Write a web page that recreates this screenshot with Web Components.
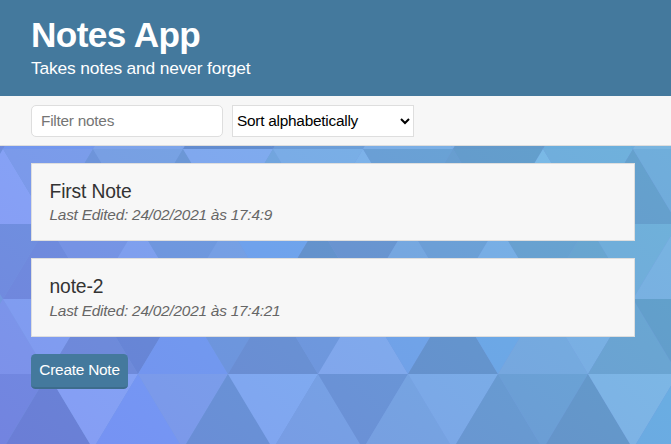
<!DOCTYPE html>
<html lang="en">
<head>
<meta charset="utf-8">
<title>Notes App</title>
<style>
html,body{margin:0;height:100%;overflow:hidden}
body{font-family:"Liberation Sans",Arial,sans-serif;color:#333}
</style>
</head>
<body>
<notes-app>
  <app-header slot="header" heading="Notes App">Takes notes and never forget</app-header>
  <filter-bar slot="filters"></filter-bar>
  <note-card heading="First Note">Last Edited: 24/02/2021 às 17:4:9</note-card>
  <note-card heading="note-2">Last Edited: 24/02/2021 às 17:4:21</note-card>
  <app-button>Create Note</app-button>
</notes-app>
<script>
function shadow(el, html){ el.attachShadow({mode:'open'}).innerHTML = html; }

customElements.define('triangle-backdrop', class extends HTMLElement {
  connectedCallback(){
    // Rows are 75px high; triangles are 90px wide. Each list alternates from its first apex x.
    const rows = [
      {y:74,  x:-42, up:true,  c:'6f8bdd 6f8bdd 7399ee 7399ee 7da5ea 7da5ea 628ecf 628ecf 6c9fd8 6c9fd8 7bb0e5 7bb0e5 649ccb 649ccb 6cb0dc 6cb0dc 79b7df'},
      {y:149, x:-42, up:false, c:'6f8bdd 86a0f5 7b9aea 6e93da 789fe3 6c96d6 80a8ee 72a4de 7aace6 7db1e9 6a9fd5 689dd0 649ccc 7ab8e6 70aedc 65a0cd 70addb'},
      {y:224, x:3,   up:false, c:'708cdf 6f8add 7693e4 7f9fee 6f97de 769fe4 6fa2ec 6492cc 6994d0 76a7e0 6c9fd6 78aee5 68a1d0 69a5d0 70aeda 78b3e1'},
      {y:299, x:3,   up:true,  c:'7c93ea 809cf0 6e8ada 6786d6 7298ef 6d96dd 6990d3 6e98dd 80a9ec 70a3e8 6494cd 6ca8e6 75aadf 79b0e3 6aa5d2 629fcb'},
      {y:374, x:3,   up:false, c:'7285e0 6a80d6 859ff4 7595f3 7b9aea 6990d6 80a7f0 779fe4 6a92d6 76a2e1 7ba9e7 6899d1 6b9fd5 6497ca 7db4e5 6aade2'}
    ];
    let defs = '', shapes = '', id = 0;
    for (const r of rows) {
      let up = r.up, x = r.x;
      for (const hex of r.c.split(' ')) {
        const v = [0,2,4].map(i => parseInt(hex.substr(i,2),16));
        const a = `rgb(${v[0]+1},${v[1]-3},${v[2]})`, b = `rgb(${v[0]-1},${v[1]+3},${v[2]})`;
        const t = r.y, m = r.y + 75;
        defs += `<linearGradient id="g${id}" x1="0" y1="1" x2="1" y2="0"><stop stop-color="${a}"/><stop offset="1" stop-color="${b}"/></linearGradient>`;
        shapes += `<polygon fill="url(#g${id})" points="${up ? `${x},${t} ${x+45},${m} ${x-45},${m}` : `${x-45},${t} ${x+45},${t} ${x},${m}`}"/>`;
        id++; up = !up; x += 45;
      }
    }
    shadow(this, `<style>:host{display:block}svg{display:block;background:#7298e0}</style><svg width="671" height="444"><defs>${defs}</defs>${shapes}</svg>`);
  }
});

customElements.define('notes-app', class extends HTMLElement {
  connectedCallback(){
    shadow(this, `<style>
      :host{display:block;position:relative;height:444px;overflow:hidden}
      triangle-backdrop{position:absolute;inset:0}
      .page{position:relative}
      main{padding:17px 36px 0 31px;display:flex;flex-direction:column;align-items:stretch;gap:17px}
    </style><triangle-backdrop></triangle-backdrop>
    <div class="page"><slot name="header"></slot><slot name="filters"></slot><main><slot></slot></main></div>`);
  }
});

customElements.define('app-header', class extends HTMLElement {
  connectedCallback(){
    shadow(this, `<style>
      :host{display:block;box-sizing:border-box;height:96px;background:#44799d;color:#fff;padding:15px 31px 0}
      h1{margin:0;font-size:35.2px;line-height:40px;font-weight:700;letter-spacing:-.6px}
      p{margin:3px 0 0;font-size:17.4px;line-height:20px;letter-spacing:-.17px}
    </style><h1>${this.getAttribute('heading')}</h1><p><slot></slot></p>`);
  }
});

customElements.define('filter-bar', class extends HTMLElement {
  connectedCallback(){
    shadow(this, `<style>
      :host{display:flex;gap:9px;box-sizing:border-box;height:50px;background:#f7f7f7;border-bottom:1px solid #dedede;padding:9px 31px 0}
      input,.select{box-sizing:border-box;height:32px;border:1px solid #dedede;background:#fff;font:15.4px "Liberation Sans",Arial,sans-serif;letter-spacing:-.25px}
      input{width:192px;border-radius:5px;padding:0 9px;margin:0;outline:0}
      input::placeholder{color:#757575;opacity:1}
      .select{width:182px;padding:0 3px 0 4px;color:#000;display:flex;align-items:center;justify-content:space-between}
    </style><input placeholder="Filter notes">
    <div class="select" role="combobox"><span>Sort alphabetically</span>
    <svg width="10" height="8" viewBox="0 0 10 8"><path d="M1 2L5 6L9 2" fill="none" stroke="#000" stroke-width="2"/></svg></div>`);
  }
});

customElements.define('note-card', class extends HTMLElement {
  connectedCallback(){
    shadow(this, `<style>
      :host{display:block;box-sizing:border-box;height:78px;background:#f7f7f7;border:1px solid #dedede;padding:16px 17.5px 0}
      :host(:nth-of-type(2)){height:79px}
      h2{margin:0;font-size:19.3px;line-height:23px;font-weight:400;color:#333;letter-spacing:-.15px}
      p{margin:1px 0 0;font-size:15.4px;line-height:22px;font-style:italic;color:#666;letter-spacing:-.23px}
      :host(:nth-of-type(2)) p{margin-top:2px}
    </style><h2>${this.getAttribute('heading')}</h2><p><slot></slot></p>`);
  }
});

customElements.define('app-button', class extends HTMLElement {
  connectedCallback(){
    shadow(this, `<style>
      :host{display:block;align-self:flex-start}
      button{display:block;box-sizing:border-box;width:97px;height:35px;margin:0;padding:0 0 1px;border:0;border-bottom:2px solid #3d6c8c;border-radius:4.5px;background:#44799d;color:#fff;font:15.4px "Liberation Sans",Arial,sans-serif;letter-spacing:-.23px;white-space:nowrap}
    </style><button><slot></slot></button>`);
  }
});
</script>
</body>
</html>
